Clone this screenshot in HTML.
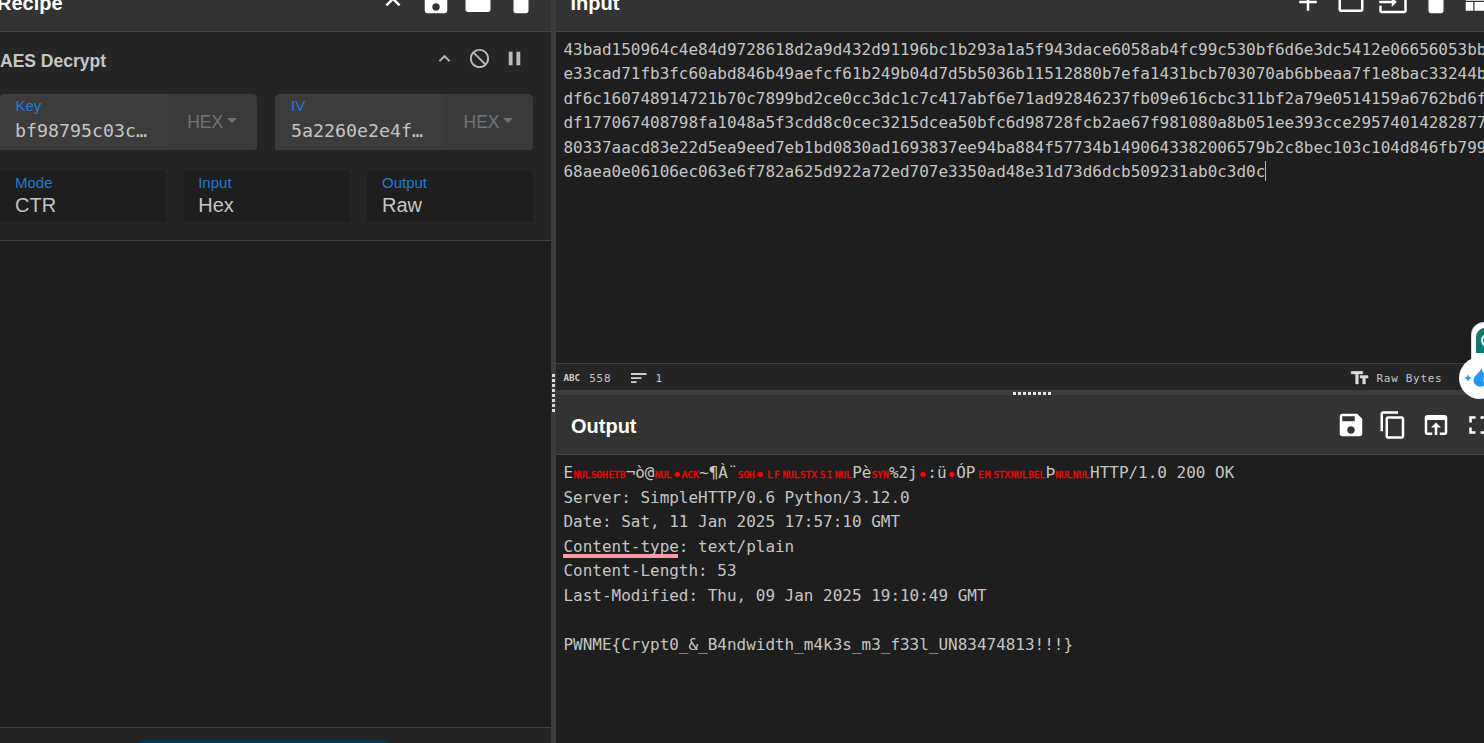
<!DOCTYPE html>
<html lang="en">
<head>
<meta charset="utf-8">
<title>CyberChef</title>
<style>
*{box-sizing:border-box;margin:0;padding:0}
html,body{width:1484px;height:743px;overflow:hidden;background:#1e1e1e}
body{position:relative;font-family:"Liberation Sans",Arial,sans-serif;color:#c5c5c5}
.abs{position:absolute}
.mono{font-family:"DejaVu Sans Mono","Liberation Mono",monospace}
svg{position:absolute;display:block}
/* recipe panel */
#recipe{left:0;top:0;width:551px;height:743px;background:#1e1e1e;overflow:hidden}
.title{background:#333;border-bottom:1px solid #444;color:#fff;font-weight:bold;font-size:20px;white-space:nowrap}
.title span{position:absolute;line-height:24px}
#op{left:0;top:32px;width:551px;height:209px;background:#252525;border-bottom:1px solid #444}
.opname{left:0px;top:49px;font-size:17.5px;font-weight:bold;line-height:24px;color:#c5c5c5;white-space:nowrap}
.argbox{background:#3c3c3c;height:56px;top:94px;border-radius:5px 5px 4px 0}
.argbox .btn{position:absolute;right:0;top:0;height:56px;width:90px;background:#3a3a3a;border-radius:0 5px 4px 0}
.lbl{position:absolute;color:#1f7bd6;font-size:15px;line-height:18px;white-space:nowrap}
.val{position:absolute;color:#c5c5c5;white-space:nowrap}
.hex{position:absolute;color:#6c757d;font-size:17.5px;line-height:20px}
.caret{position:absolute;width:0;height:0;border-left:5px solid transparent;border-right:5px solid transparent;border-top:5.5px solid #6c757d}
.selbox{background:#1e1e1e;top:170px;height:52px;width:166px;border-radius:5px 5px 0 0}
.selbox .val{font-size:20px;line-height:24px;left:15px;top:23px}
.selbox .lbl{left:15px;top:4px}
#controls{left:0;top:727px;width:551px;height:16px;background:#252525;border-top:1px solid #444}
#bake{left:131px;top:739.8px;width:263px;height:40px;background:#073655;border-radius:14px}
/* gutters */
#vg{left:551px;top:0;width:5px;height:743px;background:#3c3c3c}
#hg{left:556px;top:390px;width:928px;height:5px;background:#3c3c3c}
/* IO */
.ta{left:556px;width:928px;background:#1e1e1e;overflow:hidden}
.line{position:absolute;left:7.5px;white-space:pre;font-size:15.98px;line-height:24.5px;height:24.5px;color:#c5c5c5}
#status{left:556px;top:363px;width:928px;height:27px;background:#252525;border-top:1px solid #3c3c3c}
.st{position:absolute;font-size:11px;line-height:14px;letter-spacing:0.7px;color:#c5c5c5;white-space:pre}
.sc{display:inline-block;width:17.5px;color:#f00;font-size:9.4px;font-weight:normal;-webkit-text-stroke:0.35px #f00;text-align:center;white-space:nowrap;vertical-align:baseline}
.sc.two{letter-spacing:1px;text-indent:1px}
.dot{display:inline-block;width:9.62px;color:#f00;text-align:center;font-size:18px;line-height:10px;position:relative;top:2.9px;text-indent:-0.6px}
.ch{display:inline-block;width:9.62px;text-align:center}
</style>
</head>
<body>

<!-- ================= RECIPE PANEL ================= -->
<div id="recipe" class="abs">
  <div class="title abs" style="left:0;top:-28px;width:551px;height:60px"><span style="left:-3px;top:19px">Recipe</span></div>
  <div id="op" class="abs"></div>
  <div class="opname abs">AES Decrypt</div>

  <!-- Key -->
  <div class="argbox abs" style="left:-1px;width:258px"><div class="btn"></div>
    <span class="lbl" style="left:16.5px;top:3px">Key</span>
    <span class="val mono" style="left:16px;top:25px;font-size:18.27px;line-height:24px">bf98795c03c…</span>
    <span class="hex" style="left:188.2px;top:18px">HEX</span><i class="caret" style="left:228px;top:24px"></i>
  </div>
  <!-- IV -->
  <div class="argbox abs" style="left:275px;width:258px;border-radius:5px 5px 4px 0"><div class="btn"></div>
    <span class="lbl" style="left:16px;top:3px">IV</span>
    <span class="val mono" style="left:16px;top:25px;font-size:18.27px;line-height:24px">5a2260e2e4f…</span>
    <span class="hex" style="left:188.5px;top:18px">HEX</span><i class="caret" style="left:228.1px;top:24px"></i>
  </div>

  <div class="selbox abs" style="left:0"><span class="lbl">Mode</span><span class="val">CTR</span></div>
  <div class="selbox abs" style="left:184px"><span class="lbl" style="left:14.2px">Input</span><span class="val" style="left:14.2px">Hex</span></div>
  <div class="selbox abs" style="left:367px"><span class="lbl" style="left:15px">Output</span><span class="val" style="left:15px">Raw</span></div>

  <!-- recipe icons -->
  <svg style="left:377.9px;top:-12.75px" width="30" height="30" viewBox="0 0 24 24" fill="#fff"><path d="M7.41 15.41L12 10.83l4.59 4.58L18 14l-6-6-6 6z"/></svg>
  <svg style="left:421px;top:-12.75px" width="30" height="30" viewBox="0 0 24 24" fill="#fff"><path d="M17 3H5c-1.11 0-2 .9-2 2v14c0 1.1.89 2 2 2h14c1.1 0 2-.9 2-2V7l-4-4zm-5 16c-1.66 0-3-1.34-3-3s1.34-3 3-3 3 1.34 3 3-1.34 3-3 3zm3-10H5V5h10v4z"/></svg>
  <svg style="left:462.9px;top:-12.75px" width="30" height="30" viewBox="0 0 24 24" fill="#fff"><path d="M10 4H4c-1.1 0-1.99.9-1.99 2L2 18c0 1.1.9 2 2 2h16c1.1 0 2-.9 2-2V8c0-1.1-.9-2-2-2h-8l-2-2z"/></svg>
  <svg style="left:506.1px;top:-12.75px" width="30" height="30" viewBox="0 0 24 24" fill="#fff"><path d="M6 19c0 1.1.9 2 2 2h8c1.1 0 2-.9 2-2V7H6v12zM19 4h-3.5l-1-1h-5l-1 1H5v2h14V4z"/></svg>
  <svg style="left:433.4px;top:46.9px" width="23" height="23" viewBox="0 0 24 24" fill="#bbb"><path d="M12 8l-6 6 1.41 1.41L12 10.83l4.59 4.58L18 14z"/></svg>
  <svg style="left:468.1px;top:46.9px" width="23" height="23" viewBox="0 0 24 24" fill="#bbb"><path d="M12 2C6.48 2 2 6.48 2 12s4.48 10 10 10 10-4.48 10-10S17.52 2 12 2zm0 18c-4.42 0-8-3.58-8-8 0-1.85.63-3.55 1.69-4.9L16.9 18.31C15.55 19.37 13.85 20 12 20zm6.31-3.1L7.1 5.69C8.45 4.63 10.15 4 12 4c4.42 0 8 3.58 8 8 0 1.85-.63 3.55-1.69 4.9z"/></svg>
  <svg style="left:503px;top:47.15px" width="23" height="23" viewBox="0 0 24 24" fill="#bbb"><path d="M6 19h4V5H6v14zm8-14v14h4V5h-4z"/></svg>
  <div id="controls" class="abs"></div>
  <div id="bake" class="abs"></div>
</div>

<!-- gutters -->
<div id="vg" class="abs"><i class="abs" style="left:1px;top:374.00px;width:3.2px;height:3px;background:#dcdcdc;box-shadow:-1px 0 0 #2a2a2a"></i><i class="abs" style="left:1px;top:379.07px;width:3.2px;height:3px;background:#dcdcdc;box-shadow:-1px 0 0 #2a2a2a"></i><i class="abs" style="left:1px;top:384.14px;width:3.2px;height:3px;background:#dcdcdc;box-shadow:-1px 0 0 #2a2a2a"></i><i class="abs" style="left:1px;top:389.21px;width:3.2px;height:3px;background:#dcdcdc;box-shadow:-1px 0 0 #2a2a2a"></i><i class="abs" style="left:1px;top:394.28px;width:3.2px;height:3px;background:#dcdcdc;box-shadow:-1px 0 0 #2a2a2a"></i><i class="abs" style="left:1px;top:399.35px;width:3.2px;height:3px;background:#dcdcdc;box-shadow:-1px 0 0 #2a2a2a"></i><i class="abs" style="left:1px;top:404.42px;width:3.2px;height:3px;background:#dcdcdc;box-shadow:-1px 0 0 #2a2a2a"></i><i class="abs" style="left:1px;top:409.49px;width:3.2px;height:3px;background:#dcdcdc;box-shadow:-1px 0 0 #2a2a2a"></i></div>

<!-- ================= INPUT ================= -->
<div class="title abs" style="left:556px;top:-28px;width:928px;height:60px"><span style="left:14.5px;top:19px">Input</span></div>
<!-- input icons -->
<svg style="left:1292.9px;top:-12.75px" width="30" height="30" viewBox="0 0 24 24" fill="#fff"><path d="M19 13h-6v6h-2v-6H5v-2h6V5h2v6h6v2z"/></svg>
<svg style="left:1335.75px;top:-12.75px" width="30" height="30" viewBox="0 0 24 24" fill="#fff"><path d="M20 6h-8l-2-2H4c-1.1 0-1.99.9-1.99 2L2 18c0 1.1.9 2 2 2h16c1.1 0 2-.9 2-2V8c0-1.1-.9-2-2-2zm0 12H4V8h16v10z"/></svg>
<svg style="left:1377.5px;top:-12.75px" width="30" height="30" viewBox="0 0 24 24" fill="#fff"><path d="M21 3.01H3c-1.1 0-2 .9-2 2V9h2V4.99h18v14.03H3V15H1v4.01c0 1.1.9 1.98 2 1.98h18c1.1 0 2-.88 2-1.98v-14c0-1.11-.9-2-2-2zM11 16l4-4-4-4v3H1v2h10v3z"/></svg>
<svg style="left:1420.6px;top:-12.75px" width="30" height="30" viewBox="0 0 24 24" fill="#fff"><path d="M6 19c0 1.1.9 2 2 2h8c1.1 0 2-.9 2-2V7H6v12zM19 4h-3.5l-1-1h-5l-1 1H5v2h14V4z"/></svg>
<svg style="left:1462.25px;top:-12.75px" width="30" height="30" viewBox="0 0 24 24" fill="#fff"><path d="M3 19h6v-7H3v7zm7 0h12v-7H10v7zM3 5v6h19V5H3z"/></svg>
<div class="ta abs mono" style="top:32px;height:331px" id="inp">
<div class="line" style="top:6px">43bad150964c4e84d9728618d2a9d432d91196bc1b293a1a5f943dace6058ab4fc99c530bf6d6e3dc5412e06656053bb3</div>
<div class="line" style="top:30px">e33cad71fb3fc60abd846b49aefcf61b249b04d7d5b5036b11512880b7efa1431bcb703070ab6bbeaa7f1e8bac33244b7</div>
<div class="line" style="top:55px">df6c160748914721b70c7899bd2ce0cc3dc1c7c417abf6e71ad92846237fb09e616cbc311bf2a79e0514159a6762bd6f1</div>
<div class="line" style="top:79px">df177067408798fa1048a5f3cdd8c0cec3215dcea50bfc6d98728fcb2ae67f981080a8b051ee393cce295740142828774</div>
<div class="line" style="top:104px">80337aacd83e22d5ea9eed7eb1bd0830ad1693837ee94ba884f57734b1490643382006579b2c8bec103c104d846fb7992</div>
<div class="line" style="top:128px">68aea0e06106ec063e6f782a625d922a72ed707e3350ad48e31d73d6dcb509231ab0c3d0c</div>
<i class="abs" style="left:708.9px;top:129px;width:1.4px;height:20px;background:#b8b8b8"></i>
</div>
<div id="status" class="abs mono">
  <span class="abs" style="left:7.6px;top:9.1px;font-family:'DejaVu Sans Mono',monospace;font-weight:bold;font-size:9.2px;line-height:10px;letter-spacing:-0.1px;color:#d0d0d0">ABC</span>
  <span class="st" style="left:33.3px;top:8px">558</span>
  <span class="st" style="left:99.5px;top:8px">1</span>
  <span class="st" style="left:820.5px;top:8px">Raw Bytes</span>
</div>
<!-- status icons -->
<svg style="left:630.8px;top:373px" width="16" height="10" viewBox="0 0 16 10" fill="#d0d0d0"><path d="M0 0.1h15.4v1.9H0zM0 4.15h10.5v1.85H0zM0 8.2h5.6v1.8H0z"/></svg>
<svg style="left:1348.6px;top:368.1px" width="21.25" height="20.2" viewBox="0 0 24 24" preserveAspectRatio="none" fill="#dedede" stroke="#dedede" stroke-width="0.5"><path d="M2.5 4v3h5v12h3V7h5V4h-13zm19 5h-9v3h3v7h3v-7h3V9z"/></svg>
<div id="hg" class="abs"><i class="abs" style="left:457.0px;top:2px;width:3.2px;height:3px;background:#e4e4e4;box-shadow:0 1px 0 #222"></i><i class="abs" style="left:462.0px;top:2px;width:3.2px;height:3px;background:#e4e4e4;box-shadow:0 1px 0 #222"></i><i class="abs" style="left:467.0px;top:2px;width:3.2px;height:3px;background:#e4e4e4;box-shadow:0 1px 0 #222"></i><i class="abs" style="left:472.0px;top:2px;width:3.2px;height:3px;background:#e4e4e4;box-shadow:0 1px 0 #222"></i><i class="abs" style="left:477.0px;top:2px;width:3.2px;height:3px;background:#e4e4e4;box-shadow:0 1px 0 #222"></i><i class="abs" style="left:482.0px;top:2px;width:3.2px;height:3px;background:#e4e4e4;box-shadow:0 1px 0 #222"></i><i class="abs" style="left:487.0px;top:2px;width:3.2px;height:3px;background:#e4e4e4;box-shadow:0 1px 0 #222"></i><i class="abs" style="left:492.0px;top:2px;width:3.2px;height:3px;background:#e4e4e4;box-shadow:0 1px 0 #222"></i></div>

<!-- ================= OUTPUT ================= -->
<div class="title abs" style="left:556px;top:395px;width:928px;height:60px"><span style="left:15px;top:19px">Output</span></div>
<!-- output icons -->
<svg style="left:1336px;top:410px" width="30" height="30" viewBox="0 0 24 24" fill="#fff"><path d="M17 3H5c-1.11 0-2 .9-2 2v14c0 1.1.89 2 2 2h14c1.1 0 2-.9 2-2V7l-4-4zm-5 16c-1.66 0-3-1.34-3-3s1.34-3 3-3 3 1.34 3 3-1.34 3-3 3zm3-10H5V5h10v4z"/></svg>
<svg style="left:1378.2px;top:410px" width="30" height="30" viewBox="0 0 24 24" fill="#fff"><path d="M16 1H4c-1.1 0-2 .9-2 2v14h2V3h12V1zm3 4H8c-1.1 0-2 .9-2 2v14c0 1.1.9 2 2 2h11c1.1 0 2-.9 2-2V7c0-1.1-.9-2-2-2zm0 16H8V7h11v14z"/></svg>
<svg style="left:1421.1px;top:409.9px" width="30" height="30" viewBox="0 0 24 24" fill="#fff"><path d="M19 4H5c-1.11 0-2 .9-2 2v12c0 1.1.89 2 2 2h4v-2H5V8h14v10h-4v2h4c1.1 0 2-.9 2-2V6c0-1.1-.89-2-2-2zm-7 6l-4 4h3v6h2v-6h3l-4-4z"/></svg>
<svg style="left:1462.8px;top:409.9px" width="30" height="30" viewBox="0 0 24 24" fill="#fff"><path d="M7 14H5v5h5v-2H7v-3zm-2-4h2V7h3V5H5v5zm12 7h-3v2h5v-5h-2v3zM14 5v2h3v3h2V5h-5z"/></svg>
<div class="ta abs mono" style="top:455px;height:288px" id="out">
<div class="line" style="top:6px">E<span class="sc">NUL</span><span class="sc">SOH</span><span class="sc">ETB</span>¬ò@<span class="sc">NUL</span><span class="dot">•</span><span class="sc">ACK</span>~¶À¨<span class="sc">SOH</span><span class="dot">•</span><span class="sc two">LF</span><span class="sc">NUL</span><span class="sc">STX</span><span class="sc two">SI</span><span class="sc">NUL</span>Pè<span class="sc">SYN</span>%2j<span class="dot">•</span>:ü<span class="dot">•</span>ÓP<span class="sc two">EM</span><span class="sc">STX</span><span class="sc">NUL</span><span class="sc">BEL</span>Þ<span class="sc">NUL</span><span class="sc">NUL</span>HTTP/1.0 200 OK</div>
<div class="line" style="top:31px">Server: SimpleHTTP/0.6 Python/3.12.0</div>
<div class="line" style="top:55px">Date: Sat, 11 Jan 2025 17:57:10 GMT</div>
<i class="abs" style="left:7px;top:99px;width:115px;height:3.5px;background:#ff9aa8"></i>
<div class="line" style="top:80px">Content-type: text/plain</div>
<div class="line" style="top:104px">Content-Length: 53</div>
<div class="line" style="top:129px">Last-Modified: Thu, 09 Jan 2025 19:10:49 GMT</div>
<div class="line" style="top:178px">PWNME{Crypt0_&amp;_B4ndwidth_m4k3s_m3_f33l_UN83474813!!!}</div>
</div>

<!-- floating extension widgets -->
<div class="abs" style="left:1472px;top:322.5px;width:30px;height:60px;background:#fff;border-radius:12px 0 0 0;box-shadow:0 0 0 1px #d9d6f0"></div>
<div class="abs" style="left:1476px;top:327.5px;width:30px;height:25.5px;background:#0f7b6c;border-radius:9px 0 0 0"></div>
<div class="abs" style="left:1480.5px;top:333px;width:16px;height:15px;border:2.5px solid #fff;border-radius:50%"></div>
<div class="abs" style="left:1459.3px;top:357px;width:42px;height:42px;background:#fff;border-radius:50%"></div>
<svg style="left:1463.8px;top:373.5px" width="8" height="8" viewBox="0 0 8 8" fill="#2196f3"><path d="M4 0 Q4.4 3.6 8 4 Q4.4 4.4 4 8 Q3.6 4.4 0 4 Q3.6 3.6 4 0z"/></svg>
<svg style="left:1472.5px;top:368px" width="16" height="19" viewBox="0 0 16 19" fill="#2196f3"><path d="M8.2 0.2 C7.6 4.2 0.4 7.6 0.4 12.3 A6.9 6.4 0 0 0 14.2 12.3 C14.2 8.2 9.6 5 8.2 0.2z"/><path fill="#fff" d="M10.6 9.5c1 1.5 1.3 3 .6 4.6c-.4-.2-.8-.6-.8-1.3c0-1 .4-2 .2-3.3z"/></svg>

</body>
</html>
